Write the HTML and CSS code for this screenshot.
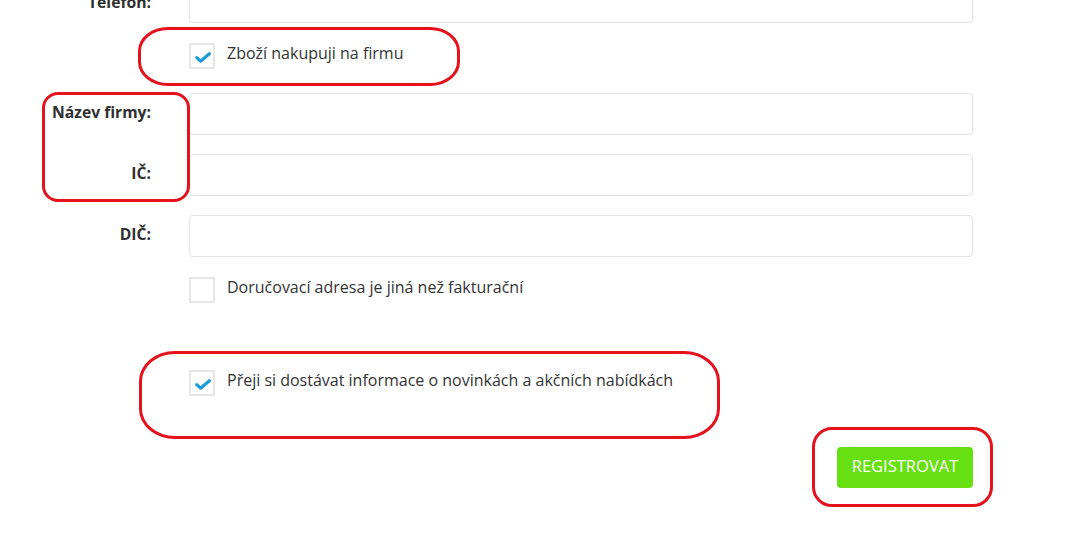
FILE: index.html
```html
<!DOCTYPE html>
<html lang="cs">
<head>
<meta charset="utf-8">
<title>Registrace</title>
<link rel="stylesheet" href="styles.css">
</head>
<body>
<form class="form">
  <div class="row row-top">
    <label class="label">Telefon:</label>
    <input class="input" type="text">
  </div>
  <div class="row check-row r-company">
    <span class="label"></span>
    <label class="check"><span class="box on"><svg viewBox="0 0 16 11" width="16" height="11"><path d="M1.8 5.6 L5.6 9.2 L14.4 1.8" fill="none" stroke="#1b9bd8" stroke-width="3.2" stroke-linecap="round" stroke-linejoin="round"/></svg></span><span class="ctext">Zboží nakupuji na firmu</span></label>
  </div>
  <div class="row r-name">
    <label class="label">Název firmy:</label>
    <input class="input" type="text">
  </div>
  <div class="row r-gap">
    <label class="label">IČ:</label>
    <input class="input" type="text">
  </div>
  <div class="row r-gap">
    <label class="label">DIČ:</label>
    <input class="input" type="text">
  </div>
  <div class="row check-row r-addr">
    <span class="label"></span>
    <label class="check"><span class="box"></span><span class="ctext">Doručovací adresa je jiná než fakturační</span></label>
  </div>
  <div class="row check-row r-news">
    <span class="label"></span>
    <label class="check"><span class="box on"><svg viewBox="0 0 16 11" width="16" height="11"><path d="M1.8 5.6 L5.6 9.2 L14.4 1.8" fill="none" stroke="#1b9bd8" stroke-width="3.2" stroke-linecap="round" stroke-linejoin="round"/></svg></span><span class="ctext">Přeji si dostávat informace o novinkách a akčních nabídkách</span></label>
  </div>
  <div class="row r-btn">
    <button class="btn" type="button">REGISTROVAT</button>
  </div>
</form>
<div class="mark m1"></div>
<div class="mark m2"></div>
<div class="mark m3"></div>
<div class="mark m4"></div>
</body>
</html>
```
FILE: styles.css
```css
html, body {
  margin: 0;
  padding: 0;
  background: #fff;
  overflow: hidden;
}
body {
  font-family: "Open Sans", "Noto Sans", sans-serif;
  color: #333;
  width: 1088px;
  height: 553px;
  position: relative;
}
.form {
  display: flex;
  flex-direction: column;
  width: 973px;
}
.row {
  display: flex;
  align-items: center;
  gap: 38px;
}
.row-top { margin-top: -19px; }
.r-company { margin-top: 20px; }
.r-name { margin-top: 24px; }
.r-gap { margin-top: 19px; }
.r-addr { margin-top: 20px; }
.r-news { margin-top: 67px; }
.r-btn { margin-top: 51px; justify-content: flex-end; }
.label {
  width: 151px;
  flex: none;
  text-align: right;
  font-weight: 700;
  font-size: 15.7px;
  color: #2f2f2f;
  position: relative;
  top: -2px;
}
.row-top .label { top: 0; }
.input {
  flex: none;
  box-sizing: border-box;
  width: 784px;
  height: 42px;
  border: 1px solid #e4e4e4;
  border-radius: 4px;
  background: #fff;
  margin: 0;
}
.check {
  display: flex;
  align-items: center;
  gap: 12px;
}
.box {
  box-sizing: border-box;
  width: 26px;
  height: 26px;
  border: 2px solid #e6e6e6;
  display: flex;
  align-items: center;
  justify-content: center;
  flex: none;
}
.box svg { margin-top: 3px; margin-left: 2px; }
.ctext {
  font-size: 16px;
  color: #333;
  position: relative;
  top: -3px;
}
.btn {
  box-sizing: border-box;
  width: 136px;
  height: 41px;
  border: none;
  border-radius: 4px;
  background: #66e011;
  color: #fff;
  font-family: "Open Sans", "Noto Sans", sans-serif;
  font-size: 16.5px;
  padding: 0 0 5px;
}
.mark {
  position: absolute;
  border: 3px solid #e5121d;
  box-sizing: border-box;
}
.m1 { left: 138px; top: 27px; width: 322px; height: 59px; border-radius: 30px / 24px; }
.m2 { left: 42px; top: 92px; width: 148px; height: 110px; border-radius: 16px; }
.m3 { left: 139px; top: 351px; width: 581px; height: 88px; border-radius: 36px / 30px; }
.m4 { left: 812px; top: 427px; width: 181px; height: 80px; border-radius: 20px; }
```
